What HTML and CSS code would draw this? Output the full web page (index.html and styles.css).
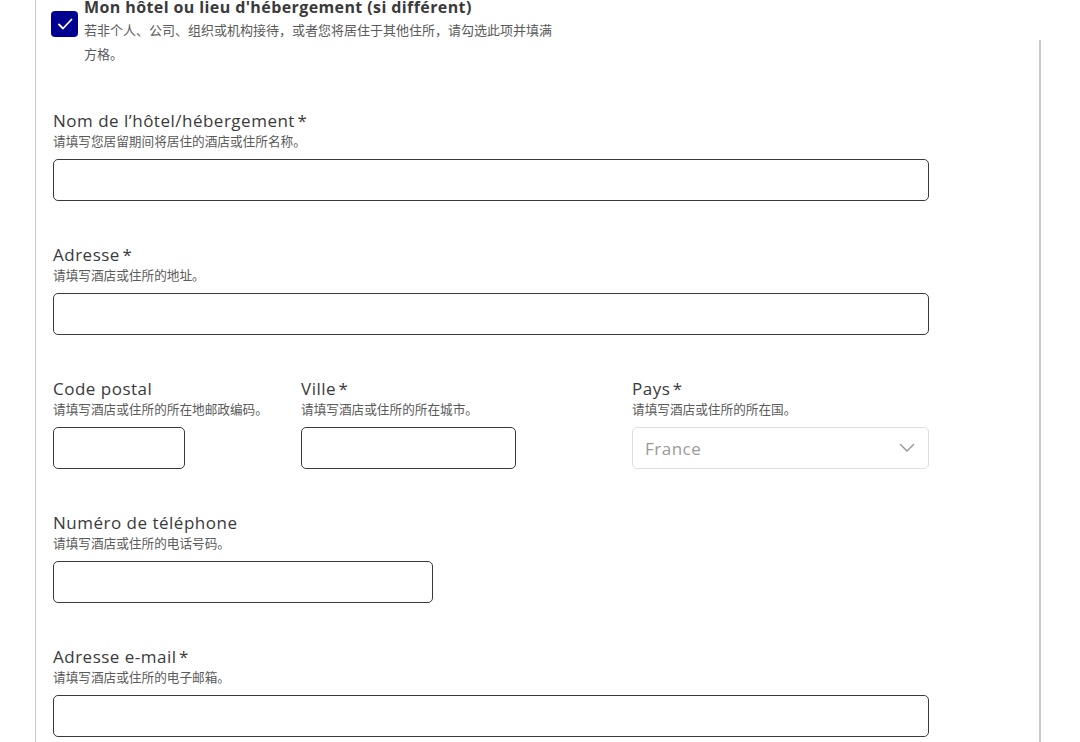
FILE: index.html
```html
<!DOCTYPE html>
<html lang="fr">
<head>
<meta charset="utf-8">
<title>Hébergement</title>
<link rel="stylesheet" href="styles.css">
</head>
<body>
<div class="page">
  <main class="panel">
    <div class="check-row">
      <span class="checkbox">
        <svg viewBox="0 0 26 26" width="26" height="26"><path d="M7 13.5l4 4 8.5-9" fill="none" stroke="#fff" stroke-width="1.8" stroke-linecap="round" stroke-linejoin="round"/></svg>
      </span>
      <div class="check-text">
        <div class="check-title">Mon hôtel ou lieu d'hébergement (si différent)</div>
        <div class="check-desc">若非个人、公司、组织或机构接待，或者您将居住于其他住所，请勾选此项并填满<br>方格。</div>
      </div>
    </div>

    <div class="field">
      <label class="label">Nom de l’hôtel/hébergement<span class="req">*</span></label>
      <div class="hint">请填写您居留期间将居住的酒店或住所名称。</div>
      <div class="input"></div>
    </div>

    <div class="field">
      <label class="label">Adresse<span class="req">*</span></label>
      <div class="hint">请填写酒店或住所的地址。</div>
      <div class="input"></div>
    </div>

    <div class="field row3">
      <div class="col">
        <label class="label">Code postal</label>
        <div class="hint">请填写酒店或住所的所在地邮政编码。</div>
        <div class="input w-cp"></div>
      </div>
      <div class="col">
        <label class="label">Ville<span class="req">*</span></label>
        <div class="hint">请填写酒店或住所的所在城市。</div>
        <div class="input w-ville"></div>
      </div>
      <div class="col">
        <label class="label">Pays<span class="req">*</span></label>
        <div class="hint">请填写酒店或住所的所在国。</div>
        <div class="select">
          <span>France</span>
          <svg viewBox="0 0 16 10" width="16" height="10"><path d="M1.5 1.5l6.5 6.5 6.5-6.5" fill="none" stroke="#9a9a9a" stroke-width="1.5" stroke-linecap="round" stroke-linejoin="round"/></svg>
        </div>
      </div>
    </div>

    <div class="field">
      <label class="label">Numéro de téléphone</label>
      <div class="hint">请填写酒店或住所的电话号码。</div>
      <div class="input w-tel"></div>
    </div>

    <div class="field">
      <label class="label">Adresse e-mail<span class="req">*</span></label>
      <div class="hint">请填写酒店或住所的电子邮箱。</div>
      <div class="input"></div>
    </div>
  </main>
  <aside class="side"></aside>
</div>
</body>
</html>
```

FILE: styles.css
```css
html, body {
  margin: 0;
  padding: 0;
  background: #fff;
  height: 100%;
  overflow: hidden;
}
body {
  font-family: "Open Sans", "Noto Sans CJK SC", sans-serif;
  color: #3a3a3a;
}
.page {
  display: flex;
  height: 742px;
  padding-left: 35px;
}
.panel {
  width: 1004px;
  border-left: 1px solid #c9c9c9;
  padding-left: 17px;
  box-sizing: border-box;
}
.side {
  margin-top: 40px;
  border-left: 2px solid #c8c8c8;
  flex: 1;
}
.check-row {
  display: flex;
  gap: 6px;
  margin-top: -3px;
}
.checkbox {
  flex: none;
  width: 27px;
  height: 26px;
  margin-top: 14px;
  margin-left: -2px;
  border-radius: 4px;
  background: #000091;
  display: flex;
  align-items: center;
  justify-content: center;
}
.check-title {
  font-weight: 700;
  font-size: 16px;
  line-height: 21px;
  letter-spacing: 0.4px;
  color: #3a3a3a;
}
.check-desc {
  font-family: "Noto Sans CJK SC", sans-serif;
  font-size: 13px;
  line-height: 24px;
  color: #5a5a5a;
}
.field {
  margin-top: 43px;
  width: 876px;
}
.check-row + .field {
  margin-top: 44px;
}
.label {
  display: block;
  font-size: 17px;
  line-height: 22px;
  letter-spacing: 0.5px;
  color: #3a3a3a;
}
.req {
  margin-left: 2.5px;
}
.hint {
  font-family: "Noto Sans CJK SC", sans-serif;
  font-size: 12.65px;
  line-height: 18px;
  letter-spacing: 0;
  color: #5a5a5a;
  margin-bottom: 9px;
}
.input {
  height: 42px;
  box-sizing: border-box;
  border: 1px solid #3a3a3a;
  border-radius: 5px;
}
.row3 {
  display: grid;
  grid-template-columns: 248px 331px 297px;
}
.w-cp { width: 132px; }
.w-ville { width: 215px; }
.w-tel { width: 380px; }
.select {
  height: 42px;
  box-sizing: border-box;
  border: 1px solid #dedede;
  border-radius: 5px;
  display: flex;
  align-items: center;
  justify-content: space-between;
  padding: 0 13px 0 12px;
  font-size: 17px;
  letter-spacing: 0.5px;
  color: #9a9a9a;
}
```
